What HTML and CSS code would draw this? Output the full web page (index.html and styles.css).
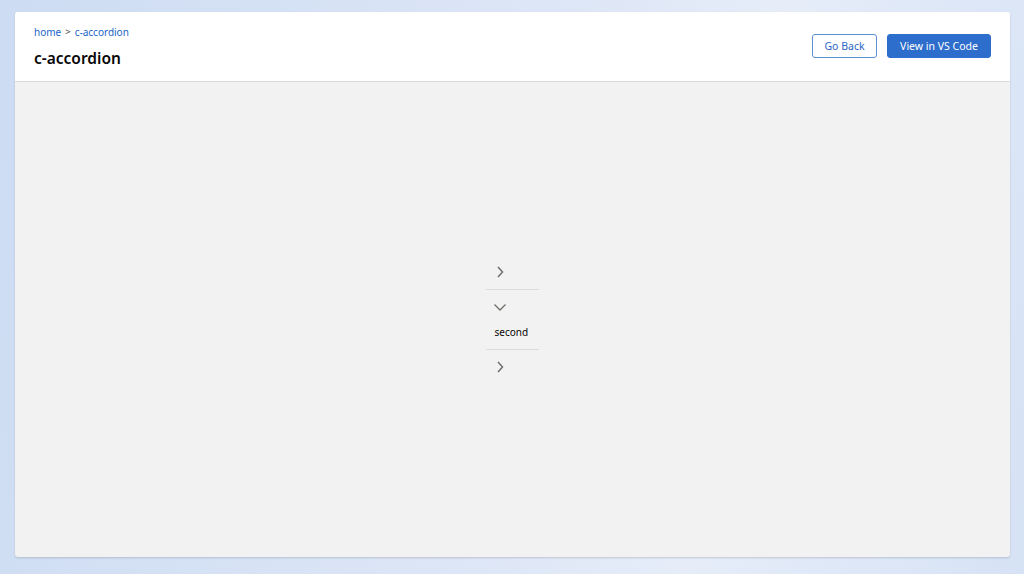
FILE: index.html
```html
<!DOCTYPE html>
<html>
<head>
<meta charset="utf-8">
<link rel="stylesheet" href="styles.css">
</head>
<body>
<div class="card">
  <header class="header">
    <div class="titles">
      <nav class="crumbs"><a class="crumb">home</a><span class="sep">&gt;</span><a class="crumb">c-accordion</a></nav>
      <h1 class="title">c-accordion</h1>
    </div>
    <div class="actions">
      <button class="btn btn-neutral">Go Back</button>
      <button class="btn btn-brand">View in VS Code</button>
    </div>
  </header>
  <main class="stage">
    <div class="accordion">
      <section class="section">
        <div class="summary"><svg class="chev" width="12" height="12" viewBox="0 0 12 12"><path d="M4 1 L8.5 6 L4 11" fill="none" stroke="#706e6b" stroke-width="1.5"/></svg></div>
      </section>
      <section class="section open">
        <div class="summary"><svg class="chev" width="12" height="12" viewBox="0 0 12 12"><path d="M0.5 3.5 L6 9 L11.5 3.5" fill="none" stroke="#706e6b" stroke-width="1.3"/></svg></div>
        <div class="content">second</div>
      </section>
      <section class="section last">
        <div class="summary"><svg class="chev" width="12" height="12" viewBox="0 0 12 12"><path d="M4 1 L8.5 6 L4 11" fill="none" stroke="#706e6b" stroke-width="1.5"/></svg></div>
      </section>
    </div>
  </main>
</div>
</body>
</html>
```

FILE: styles.css
```css
* { box-sizing: border-box; }
html, body { height: 100%; }
body {
  margin: 0;
  background: linear-gradient(100deg, #cddcf3 0%, #dde6f6 50%, #e6edf9 70%, #d6e2f5 100%);
  font-family: "Noto Sans", "Open Sans", sans-serif;
  color: #080707;
  padding: 12px 14px 17px 15px;
}
.card {
  height: 545px;
  background: #f2f2f2;
  border-radius: 3px;
  box-shadow: 0 1px 2px rgba(0,0,0,0.15);
  display: flex;
  flex-direction: column;
  overflow: hidden;
}
.header {
  height: 70px;
  background: #fff;
  border-bottom: 1px solid #dddbda;
  display: flex;
  align-items: flex-start;
  justify-content: space-between;
  padding: 13px 19px 0 19px;
}
.crumbs {
  font-size: 10px;
  line-height: 14px;
  display: flex;
  align-items: center;
}
.crumb { color: #1b65c9; text-decoration: none; }
.sep { color: #3e3e3c; margin: 0 4px; font-size: 9.5px; }
.title {
  margin: 9px 0 0 0;
  font-size: 15.5px;
  line-height: 20px;
  font-weight: 600;
  color: #080707;
}
.actions {
  display: flex;
  gap: 10px;
  margin-top: 9px;
}
.btn {
  height: 24px;
  font-family: inherit;
  font-size: 10.5px;
  border-radius: 3px;
  padding: 0;
  white-space: nowrap;
  cursor: pointer;
}
.btn-neutral {
  width: 65px;
  background: #fff;
  border: 1px solid #5b8fd6;
  color: #2b67c6;
}
.btn-brand {
  width: 104px;
  background: #2d6dcb;
  border: 1px solid #2d6dcb;
  color: #fff;
}
.stage {
  flex: 1;
  display: flex;
  align-items: center;
  justify-content: center;
}
.accordion {
  width: 53px;
  margin-right: 1px;
}
.section { border-bottom: 1px solid #dddbda; }
.section.last { border-bottom: none; }
.summary {
  height: 34px;
  display: flex;
  align-items: center;
  padding-left: 8px;
}
.chev { display: block; }
.content {
  font-size: 10px;
  line-height: 14px;
  padding: 1px 0 10px 9px;
  color: #080707;
}
```
